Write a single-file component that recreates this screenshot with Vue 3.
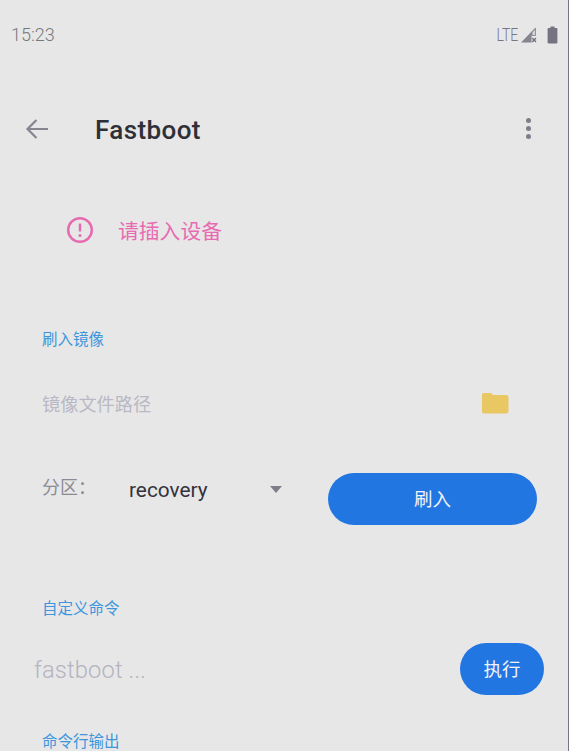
<script setup>
const statusTime = '15:23'
</script>

<template>
  <div class="screen">
    <header class="status">
      <span class="time">{{ statusTime }}</span>
      <div class="status-icons">
        <span class="lte">LTE</span>
        <svg class="signal" width="18" height="18" viewBox="0 0 18 18">
          <path d="M1 16.500 L15.500 1.500 V9.500 H11.500 V16.500 Z" fill="#86848f" />
          <path d="M12 9.500 H15.500 V2.500 L12 6.500Z" fill="#d6d5da" stroke="#86848f" stroke-width="0.800" />
          <path d="M12.200 12 L16 16 M16 12 L12.200 16" stroke="#6f6d7a" stroke-width="1.300" />
        </svg>
        <svg class="battery" width="11" height="18" viewBox="0 0 11 18">
          <path d="M3.500 0.500 H7.500 V2 H9.600 Q10.400 2 10.400 2.800 V16.600 Q10.400 17.400 9.600 17.400 H1.400 Q0.600 17.400 0.600 16.600 V2.800 Q0.600 2 1.400 2 H3.500Z" fill="#757382" />
        </svg>
      </div>
    </header>

    <nav class="toolbar">
      <svg class="back" width="24" height="22" viewBox="0 0 24 22">
        <path d="M23 11 H3 M11.500 2 L2.500 11 L11.500 20" fill="none" stroke="#87858f" stroke-width="2.200" />
      </svg>
      <h1 class="title">Fastboot</h1>
      <div class="more">
        <i></i><i></i><i></i>
      </div>
    </nav>

    <section class="notice">
      <svg class="alert" width="28" height="28" viewBox="0 0 28 28">
        <circle cx="14" cy="14" r="11.800" fill="none" stroke="#e76bb0" stroke-width="2.500" />
        <path d="M14 7.500 V15.500" stroke="#e76bb0" stroke-width="2.500" />
        <circle cx="14" cy="19.500" r="1.500" fill="#e76bb0" />
      </svg>
      <span class="notice-text">请插入设备</span>
    </section>

    <section class="flash">
      <h2 class="label">刷入镜像</h2>
      <div class="path-row">
        <span class="path-hint">镜像文件路径</span>
        <svg class="folder" width="28" height="22" viewBox="0 0 28 22">
          <path d="M1 2.500 Q1 1 2.500 1 H10 L12 3 H25.500 Q27.500 3 27.500 5 V19.500 Q27.500 21.500 25.500 21.500 H3 Q1 21.500 1 19.500 Z" fill="#e9c863" />
        </svg>
      </div>
      <div class="partition-row">
        <span class="partition-label">分区：</span>
        <span class="partition-value">recovery</span>
        <span class="caret"></span>
        <button class="btn flash-btn">刷入</button>
      </div>
    </section>

    <section class="custom">
      <h2 class="label">自定义命令</h2>
      <div class="cmd-row">
        <span class="cmd-hint">fastboot ...</span>
        <button class="btn run-btn">执行</button>
      </div>
      <h2 class="label output-label">命令行输出</h2>
    </section>
  </div>
</template>

<style scoped>
.screen {
  width: 569px;
  height: 751px;
  overflow: hidden;
  box-sizing: border-box;
  background: #e7e7e8;
  border-right: 1px solid #77757f;
  font-family: Roboto, "Noto Sans CJK SC", sans-serif;
  color: #2a2a32;
}
.status {
  height: 70px;
  box-sizing: border-box;
  padding: 24px 10px 0 11px;
  display: flex;
  justify-content: space-between;
  align-items: flex-start;
}
.time {
  font-size: 18px;
  line-height: 21px;
  font-weight: 300;
  color: #77777e;
}
.status-icons {
  display: flex;
  align-items: center;
  gap: 9px;
  height: 21px;
}
.lte {
  display: inline-block;
  font-size: 17.500px;
  font-weight: 300;
  color: #77777e;
  margin-right: -7px;
  transform: scaleX(0.8);
  transform-origin: right center;
}
.toolbar {
  height: 118px;
  box-sizing: border-box;
  padding: 0 37px 0 25px;
  display: flex;
  align-items: center;
}
.toolbar .back {
  flex: none;
  margin-top: -1px;
}
.title {
  margin: 2px 0 0 46px;
  font-size: 26px;
  line-height: 30px;
  font-weight: 500;
  letter-spacing: 0.400px;
  flex: 1;
  color: #2f2f37;
}
.more {
  display: flex;
  flex-direction: column;
  gap: 3px;
  margin-top: -2px;
}
.more i {
  display: block;
  width: 5px;
  height: 5px;
  border-radius: 50%;
  background: #7f7d89;
}
.notice {
  height: 84px;
  box-sizing: border-box;
  padding-left: 66px;
  display: flex;
  align-items: center;
  gap: 24px;
}
.notice-text {
  font-size: 20.800px;
  color: #e76bb0;
}
.flash {
  padding: 58px 31px 0 42px;
}
.label {
  margin: 0;
  font-size: 15.500px;
  line-height: 20px;
  font-weight: 400;
  color: #3d96dc;
}
.path-row {
  display: flex;
  justify-content: space-between;
  align-items: center;
  padding-right: 28px;
  margin-top: 38px;
  height: 30px;
}
.path-hint {
  font-size: 18.200px;
  color: #b9b8c4;
}
.folder {
  margin-bottom: 1px;
}
.partition-row {
  display: flex;
  align-items: flex-start;
  margin-top: 55px;
}
.partition-label {
  font-size: 18px;
  line-height: 24px;
  margin-top: 3px;
  color: #8c8b94;
  width: 87px;
  flex: none;
}
.partition-value {
  font-size: 20.800px;
  font-weight: 400;
  line-height: 24px;
  margin-top: 5px;
  width: 141px;
  flex: none;
  color: #33333b;
}
.caret {
  flex: none;
  margin-top: 13px;
  width: 0;
  height: 0;
  border-left: 6px solid transparent;
  border-right: 6px solid transparent;
  border-top: 7px solid #7f7d89;
}
.btn {
  border: none;
  padding: 0 0 3px;
  background: #2276e2;
  color: #f3f3f5;
  font-family: inherit;
  font-size: 18.500px;
  border-radius: 26px;
  height: 52px;
  flex: none;
}
.flash-btn {
  width: 209px;
  margin-left: 46px;
}
.custom {
  padding-top: 74px;
}
.custom .label {
  margin-left: 42px;
}
.cmd-row {
  display: flex;
  justify-content: space-between;
  align-items: center;
  padding: 0 24px 0 34px;
  margin-top: 24px;
}
.cmd-hint {
  font-size: 23.700px;
  font-weight: 300;
  color: #b4b3bf;
  letter-spacing: 0.150px;
  margin-top: 2px;
}
.run-btn {
  width: 84px;
}
.output-label {
  margin-top: 37px;
}
</style>
